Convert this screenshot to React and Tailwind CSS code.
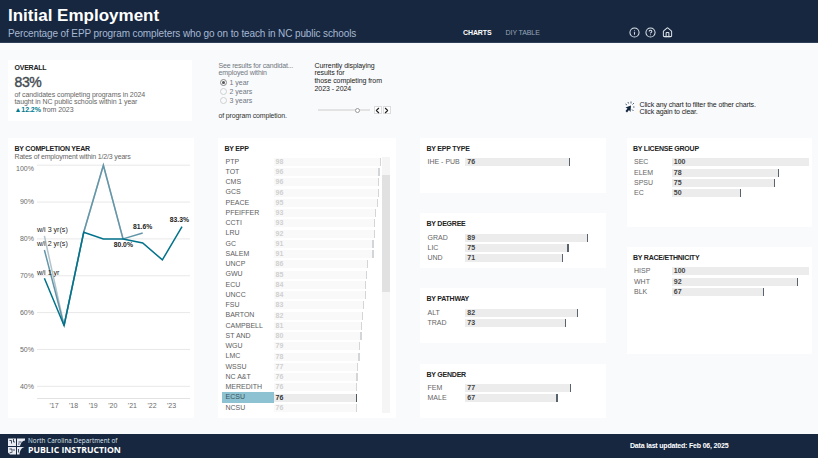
import React, { useState } from 'react';
import { Info, CircleHelp, House, ChevronLeft, ChevronRight } from 'lucide-react';

const EPP = [
  ['PTP', 98], ['TOT', 96.4], ['CMS', 96.2], ['GCS', 95.8], ['PEACE', 95], ['PFEIFFER', 93], ['CCTI', 92.5], ['LRU', 92],
  ['GC', 91], ['SALEM', 90.8], ['UNCP', 86], ['GWU', 85], ['ECU', 84.2], ['UNCC', 84], ['FSU', 82.5], ['BARTON', 81.5],
  ['CAMPBELL', 80.6], ['ST AND', 80], ['WGU', 78.8], ['LMC', 78], ['WSSU', 77], ['NC A&T', 76.2], ['MEREDITH', 76], ['ECSU', 75.5], ['NCSU', 75.5],
];

const MIDDLE = [
  { title: 'BY EPP TYPE', rows: [['IHE - PUB', 76]] },
  { title: 'BY DEGREE', rows: [['GRAD', 89], ['LIC', 75], ['UND', 71]] },
  { title: 'BY PATHWAY', rows: [['ALT', 82], ['TRAD', 73]] },
  { title: 'BY GENDER', rows: [['FEM', 77], ['MALE', 67]] },
];

const SERIES = [
  { color: '#b3c4cc', values: [80.8, 56.5, 81.8, 100, 80] },
  { color: '#6396a8', values: [77, 56.5, 81.8, 100, 80, 81.6] },
  { color: '#00728a', values: [69.3, 56.5, 81.8, 80, 80, 78.9, 74.3, 83.3] },
];

const px = i => 36.4 + i * 19.66;
const py = v => 5.2 + (100 - v) * 3.685;

function Title({ children }) {
  return <h2 className="text-[7px] leading-[8px] font-bold tracking-[-0.23px] text-[#222] whitespace-nowrap">{children}</h2>;
}

function LineChart() {
  return (
    <svg width="186" height="250" viewBox="0 0 186 250" className="block" fontSize="7">
      {[100, 90, 80, 70, 60, 50, 40].map(v => (
        <g key={v}>
          <line x1="29" x2="182" y1={py(v)} y2={py(v)} stroke="#e8e8e8" strokeWidth="1" />
          <text x="26" y={py(v) + (v === 100 ? 5.8 : 2.3)} textAnchor="end" fill="#6b6b6b">{v}%</text>
        </g>
      ))}
      <line x1="29" x2="182" y1="238.5" y2="238.5" stroke="#e2e2e2" strokeWidth="1" />
      {[17, 18, 19, 20, 21, 22, 23].map((y, i) => (
        <text key={y} x={46 + i * 19.6} y="248" textAnchor="middle" fill="#6b6b6b">'{y}</text>
      ))}
      {SERIES.map(s => (
        <polyline
          key={s.color}
          points={s.values.map((v, i) => `${px(i)},${py(v)}`).join(' ')}
          fill="none"
          stroke={s.color}
          strokeWidth="1.5"
        />
      ))}
      <g fill="#222" fontSize="7.1">
        <text x="29" y="72.4">w/i 3 yr(s)</text>
        <text x="29" y="86.4">w/i 2 yr(s)</text>
        <text x="29" y="114.8">w/i 1 yr</text>
      </g>
      <g fill="#222" fontWeight="bold" fontSize="6.8" textAnchor="middle">
        <text x="115.3" y="86.6">80.0%</text>
        <text x="134.7" y="69.2">81.6%</text>
        <text x="171.4" y="62.4">83.3%</text>
      </g>
    </svg>
  );
}

function BarRow({ label, value }) {
  return (
    <div className="flex h-[10.27px] items-center">
      <span className="w-[37.5px] text-[7px] leading-[10px] text-[#666] whitespace-nowrap">{label}</span>
      <div className="relative h-[8px] bg-[#ececec]" style={{ width: value * 1.37 }}>
        <span className="block pl-[2.3px] text-[7px] leading-[8.5px] font-bold text-[#444]">{value}</span>
        {value < 100 && <i className="absolute -right-[0.8px] top-0 h-full w-[1.2px] bg-[#59636d]" />}
      </div>
    </div>
  );
}

function BarCard({ title, rows, className }) {
  return (
    <section className={`bg-white pl-[6.5px] pt-[7px] ${className}`}>
      <Title>{title}</Title>
      <div className="mt-[4.3px] pl-[1px]">
        {rows.map(([label, value]) => <BarRow key={label} label={label} value={value} />)}
      </div>
    </section>
  );
}

function EppCard() {
  const [selected, setSelected] = useState('ECSU');
  return (
    <section className="h-[280px] w-[178px] bg-white pt-[7px]">
      <div className="pl-[6.5px]"><Title>BY EPP</Title></div>
      <div className="mt-[3.7px] flex">
        <div className="w-[164px] pl-[4px]">
          {EPP.map(([label, value]) => {
            const on = label === selected;
            return (
              <div key={label} onClick={() => setSelected(label)} className="flex h-[10.25px] items-center">
                <span className={`h-full w-[51.5px] pl-[3.5px] text-[7px] leading-[10.25px] whitespace-nowrap ${on ? 'bg-[#8cc2d2] text-[#3e535b]' : 'text-[#606060]'}`}>{label}</span>
                <div className={`relative h-[8px] ${on ? 'bg-[#ececec]' : 'bg-[#f9f9f9]'}`} style={{ width: value * 1.093 }}>
                  <span className={`block pl-[2px] text-[7px] leading-[8.5px] font-bold ${on ? 'text-[#333]' : 'text-[#d0d0d0]'}`}>
                    {Math.round(value)}
                  </span>
                  <i className={`absolute -right-[0.8px] top-0 h-full w-[1.3px] ${on ? 'bg-[#4c5862]' : 'bg-[#d3d6d8]'}`} />
                </div>
              </div>
            );
          })}
        </div>
        <div className="h-[256px] w-[8px] bg-[#f5f5f5] pt-[18.5px]">
          <div className="h-[117px] bg-[#e1e1e1]" />
        </div>
      </div>
    </section>
  );
}

function Controls() {
  const [years, setYears] = useState(1);
  return (
    <div className="flex w-[178px] pt-[18.5px] text-[7px] leading-[7.7px]">
      <div className="w-[96.5px] pl-[0.5px] text-[#707780] whitespace-nowrap">
        <div className="tracking-[-0.18px]">See results for candidat...</div>
        <div className="tracking-[-0.12px]">employed within</div>
        <div className="mt-px">
          {[1, 2, 3].map(n => (
            <div key={n} onClick={() => setYears(n)} className="flex h-[9.2px] items-center gap-[2.4px] pl-[1.5px]">
              <span className={`flex size-[7px] items-center justify-center rounded-full border ${n === years ? 'border-[#888]' : 'border-[#d0d0d0]'}`}>
                {n === years && <i className="size-[3px] rounded-full bg-[#555]" />}
              </span>
              {n} year{n > 1 && 's'}
            </div>
          ))}
        </div>
        <div className="mt-[6.6px] tracking-[-0.15px] text-[#333]">of program completion.</div>
      </div>
      <div className="text-[#222] whitespace-nowrap">
        <div className="tracking-[-0.07px]">
          <div>Currently displaying</div>
          <div>results for</div>
          <div>those completing from</div>
          <div>2023 - 2024</div>
        </div>
        <div className="mt-[14px] flex items-center pl-[3px]">
          <div className="flex h-[2px] w-[52px] items-center bg-[#e3e3e3] pl-[37.5px]">
            <i className="size-[5px] shrink-0 rounded-full border border-[#999] bg-white" />
          </div>
          <div className="ml-[4px] flex gap-[1px]">
            {[ChevronLeft, ChevronRight].map((Icon, i) => (
              <button key={i} className="flex size-[8px] items-center justify-center border border-[#dcdcdc] bg-white">
                <Icon size={9} strokeWidth={3} className="shrink-0" />
              </button>
            ))}
          </div>
        </div>
      </div>
    </div>
  );
}

function ClickIcon() {
  return (
    <svg width="11" height="12" viewBox="0 0 22 24" className="shrink-0">
      <path d="M14 9 3 13 7 15 3 20 6 23 10 18 13 22Z" fill="#14273f" />
      <path d="M3 6 6 8M8 2 9 5M14 1V5M17 7 20 4M18 12H21M16 17 19 20" stroke="#14273f" strokeWidth="1.4" fill="none" />
    </svg>
  );
}

function Logo() {
  return (
    <svg width="17" height="17" viewBox="0 0 34 34" fill="none">
      <path d="M0 1H16V16H0ZM18 1H34V5C28 6 26 9 24 16H18ZM0 18H16V33H4L0 29ZM18 18H33C26 20 24 25 23 33H18Z" fill="#e9edf2" />
      <path d="M3 5H7V11M11 2V8H14M21 8H27M20 12H23M3 22H8V27M12 22V26M3 30 9 28M21 22V29" stroke="#16273f" strokeWidth="1.6" />
    </svg>
  );
}

export default function App() {
  return (
    <div className="flex h-[458px] w-[818px] flex-col overflow-hidden bg-[#f9fafc] font-['Liberation_Sans',Arial,sans-serif]">
      <header className="flex h-[43px] shrink-0 border-b border-[#2f3f57] bg-[#16273f]">
        <div className="w-[463px] pl-[8px] pt-[6px] whitespace-nowrap">
          <h1 className="text-[17px] leading-[20px] font-bold text-white">Initial Employment</h1>
          <p className="text-[10px] leading-[15.5px] tracking-[-0.12px] text-[#a6b8d3]">Percentage of EPP program completers who go on to teach in NC public schools</p>
        </div>
        <nav className="flex w-[165.5px] gap-[14px] pt-[28px] text-[7px] leading-[9px] whitespace-nowrap">
          <span className="font-bold tracking-[-0.1px] text-white">CHARTS</span>
          <span className="tracking-[-0.1px] text-[#98a5b8]">DIY TABLE</span>
        </nav>
        <div className="flex gap-[5.7px] pt-[26.5px] text-[#dce2ea]">
          <Info size={11} strokeWidth={2.2} />
          <CircleHelp size={11} strokeWidth={2.2} />
          <House size={11} strokeWidth={2.2} />
        </div>
      </header>

      <main className="h-[391px] shrink-0 pl-[8px]">
        <div className="flex h-[95px]">
          <section className="mt-[17px] mr-[26px] h-[61px] w-[184px] bg-white pl-[6.5px] pt-[3.5px] whitespace-nowrap">
            <Title>OVERALL</Title>
            <div className="mt-[3px] text-[14px] leading-[15px] font-normal tracking-[-0.4px] text-[#444b53] [-webkit-text-stroke:0.4px_#444b53]">83%</div>
            <div className="mt-px text-[7px] leading-[7.7px] tracking-[-0.08px] text-[#666]">
              <div>of candidates completing programs in 2024</div>
              <div>taught in NC public schools within 1 year</div>
              <div><b className="text-[#007a8f]">▲12.2%</b> from 2023</div>
            </div>
          </section>
          <Controls />
          <div className="ml-[228px] mt-[57.5px] flex gap-[4.5px] text-[7px] leading-[7.7px] tracking-[-0.12px] text-[#222] whitespace-nowrap">
            <ClickIcon />
            <div>
              <div>Click any chart to filter the other charts.</div>
              <div>Click again to clear.</div>
            </div>
          </div>
        </div>

        <div className="flex items-start">
          <section className="mr-[24px] h-[280px] w-[186px] bg-white pt-[7px]">
            <div className="pl-[6.5px]">
              <Title>BY COMPLETION YEAR</Title>
              <p className="text-[7px] leading-[7px] tracking-[-0.17px] text-[#666]">Rates of employment within 1/2/3 years</p>
            </div>
            <LineChart />
          </section>
          <EppCard />
          <div className="ml-[24px] flex flex-col gap-[20.5px]">
            {MIDDLE.map(c => <BarCard key={c.title} {...c} className="h-[54.7px] w-[186px]" />)}
          </div>
          <div className="ml-[20.5px] flex flex-col gap-[20.5px]">
            <BarCard
              title="BY LICENSE GROUP"
              rows={[['SEC', 100], ['ELEM', 78], ['SPSU', 75], ['EC', 50]]}
              className="h-[88.5px] w-[185.5px]"
            />
            <BarCard
              title="BY RACE/ETHNICITY"
              rows={[['HISP', 100], ['WHT', 92], ['BLK', 67]]}
              className="h-[107px] w-[185.5px]"
            />
          </div>
        </div>
      </main>

      <footer className="flex h-[24px] shrink-0 items-center bg-[#16273f] pl-[8px] whitespace-nowrap text-white">
        <Logo />
        <div className="ml-[3px] w-[602px]">
          <div className="font-['Open_Sans',sans-serif] text-[6.3px] leading-[8px] tracking-[0.05px] text-[#dfe5ec]">North Carolina Department of</div>
          <div className="font-['Open_Sans',sans-serif] text-[8.7px] leading-[10px] font-bold">PUBLIC INSTRUCTION</div>
        </div>
        <div className="pt-px text-[7px] font-bold tracking-[-0.19px]">Data last updated: Feb 06, 2025</div>
      </footer>
    </div>
  );
}
